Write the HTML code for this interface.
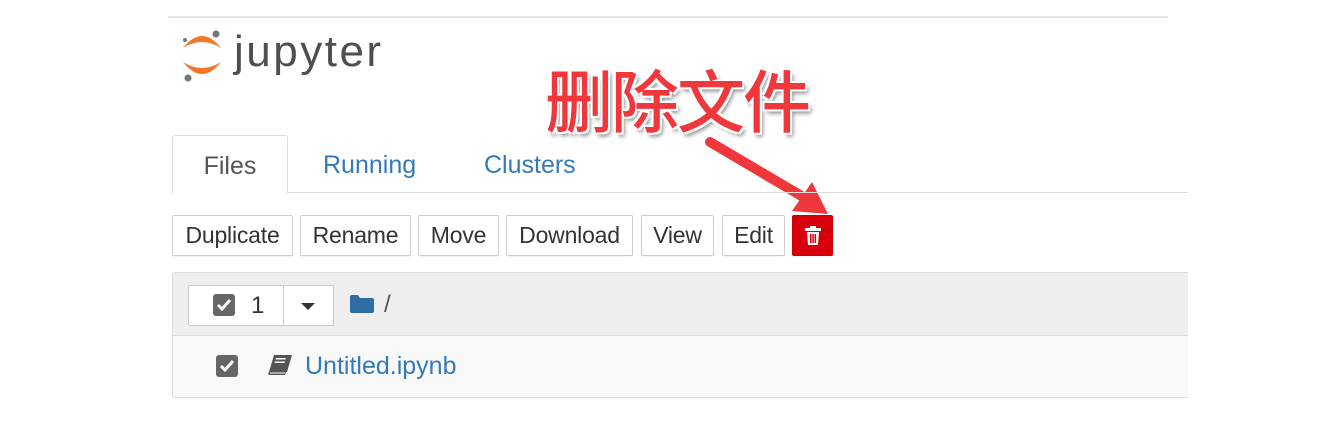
<!DOCTYPE html>
<html><head><meta charset="utf-8"><style>
*{box-sizing:border-box;margin:0;padding:0}
body{width:1327px;height:432px;background:#fff;position:relative;overflow:hidden;font-family:"Liberation Sans",Arial,sans-serif;color:#333}
.a{position:absolute}
.btn{position:absolute;top:215px;height:41px;border:1px solid #ccc;border-radius:2px;background:#fff;font-size:23px;line-height:39px;text-align:center;color:#333;box-shadow:0 1px 1px rgba(0,0,0,.05);letter-spacing:-0.2px}
.cb{position:absolute;width:22px;height:22px;background:#666;border-radius:3px}
.cb svg{position:absolute;left:3px;top:4px}
</style></head><body>
<div class="a" style="left:168px;top:16px;width:1000px;height:2px;background:#e5e5e5"></div>
<svg class="a" style="left:178px;top:28px" width="50" height="56" viewBox="0 0 50 56">
<path d="M5 20 Q24 -4 43 20 Q24 8 5 20Z" fill="#f37726"/>
<path d="M5 34 Q24 58 43 34 Q24 46 5 34Z" fill="#f37726"/>
<circle cx="38" cy="6" r="3.5" fill="#767677"/>
<circle cx="7" cy="12" r="2" fill="#767677"/>
<circle cx="10" cy="50" r="3.5" fill="#767677"/>
</svg>
<div class="a" style="left:234px;top:28px;font-size:44px;color:#4e4e4e;letter-spacing:2.5px;line-height:48px">jupyter</div>

<div class="a" style="left:545px;top:58px;font-size:68px;font-family:'Noto Sans CJK SC',sans-serif;font-weight:500;color:#f0383c;text-shadow:2px 2px 0 #fff,-2px -2px 0 #fff,2px -2px 0 #fff,-2px 2px 0 #fff,3px 4px 4px rgba(0,0,0,.45);line-height:80px;letter-spacing:-2px">删除文件</div>
<svg class="a" style="left:0;top:0" width="1327" height="432">
<line x1="710" y1="142" x2="805" y2="198" stroke="#f0383c" stroke-width="10" stroke-linecap="round"/>
<polygon points="828,214 792,211 812,182" fill="#f0383c"/>
</svg>

<div class="a" style="left:172px;top:192px;width:1016px;height:1px;background:#ddd"></div>
<div class="a" style="left:172px;top:135px;width:116px;height:58px;border:1px solid #ddd;border-bottom:none;border-radius:3px 3px 0 0;background:#fff;font-size:25px;text-align:center;line-height:60px;color:#555">Files</div>
<div class="a" style="left:323px;top:151px;font-size:25px;color:#337ab7">Running</div>
<div class="a" style="left:484px;top:151px;font-size:25px;color:#337ab7">Clusters</div>

<div class="btn" style="left:172px;width:121px">Duplicate</div>
<div class="btn" style="left:300px;width:111px">Rename</div>
<div class="btn" style="left:418px;width:81px">Move</div>
<div class="btn" style="left:506px;width:127px">Download</div>
<div class="btn" style="left:641px;width:73px">View</div>
<div class="btn" style="left:722px;width:63px">Edit</div>
<div class="btn" style="left:792px;width:41px;background:#d9000d;border-color:#c00">
<svg style="position:absolute;left:12px;top:10px" width="16" height="20" viewBox="0 0 16 20"><rect x="0" y="2" width="16" height="3" fill="#fff"/><rect x="5" y="0" width="6" height="3" fill="#fff"/><path d="M2 6h12l-1 13H3z" fill="#fff"/><rect x="5" y="8" width="1.5" height="9" fill="#d9000d"/><rect x="7.3" y="8" width="1.5" height="9" fill="#d9000d"/><rect x="9.6" y="8" width="1.5" height="9" fill="#d9000d"/></svg></div>

<div class="a" style="left:172px;top:272px;width:1016px;height:126px;border:1px solid #ddd;border-right:none;border-radius:3px 0 0 3px;background:#f9f9f9"></div>
<div class="a" style="left:173px;top:273px;width:1015px;height:63px;background:#eee;border-bottom:1px solid #ddd"></div>
<div class="a" style="left:188px;top:285px;width:146px;height:41px;border:1px solid #ccc;background:#fff;border-radius:2px"></div>
<div class="a" style="left:283px;top:285px;width:1px;height:41px;background:#ccc"></div>
<div class="cb" style="left:213px;top:294px"><svg width="16" height="14" viewBox="0 0 16 14"><path d="M2 7l4 4 8-9" stroke="#fff" stroke-width="3" fill="none"/></svg></div>
<div class="a" style="left:251px;top:292px;font-size:24px">1</div>
<div class="a" style="left:301px;top:303px;width:0;height:0;border-left:7px solid transparent;border-right:7px solid transparent;border-top:7px solid #333"></div>
<svg class="a" style="left:350px;top:294px" width="24" height="19" viewBox="0 0 24 19"><path d="M0 3a2 2 0 0 1 2-2h6l2 3h12a2 2 0 0 1 2 2v11a2 2 0 0 1-2 2H2a2 2 0 0 1-2-2z" fill="#2e6da4"/></svg>
<div class="a" style="left:384px;top:291px;font-size:24px;color:#555">/</div>

<div class="cb" style="left:216px;top:355px"><svg width="16" height="14" viewBox="0 0 16 14"><path d="M2 7l4 4 8-9" stroke="#fff" stroke-width="3" fill="none"/></svg></div>
<svg class="a" style="left:267px;top:354px" width="26" height="22" viewBox="0 0 26 22"><path d="M7 1h18l-5 17H2z" fill="#555"/><path d="M2 18h17l-1 3H2a2 2 0 0 1 0-3z" fill="#555"/><path d="M3 19h15" stroke="#fff" stroke-width="1"/><rect x="10" y="4" width="10" height="1.5" fill="#fff" transform="skewX(-15)"/><rect x="10" y="7.5" width="10" height="1.5" fill="#fff" transform="skewX(-15)"/></svg>
<div class="a" style="left:305px;top:352px;font-size:25px;color:#337ab7">Untitled.ipynb</div>
</body></html>
